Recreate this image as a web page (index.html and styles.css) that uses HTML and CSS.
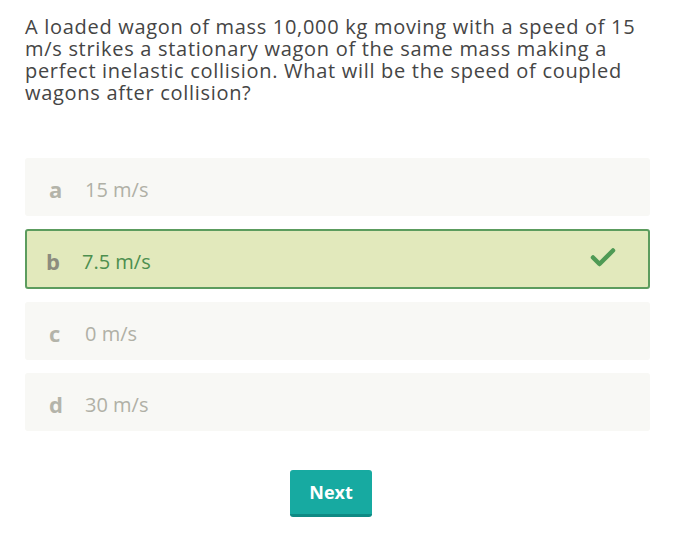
FILE: index.html
```html
<!DOCTYPE html>
<html>
<head>
<meta charset="utf-8">
<link rel="stylesheet" href="styles.css">
</head>
<body>
<div class="quiz">
  <p class="question">A loaded wagon of mass 10,000 kg moving with a speed of 15 m/s strikes a stationary wagon of the same mass making a perfect inelastic collision. What will be the speed of coupled wagons after collision?</p>
  <div class="options">
    <div class="option"><span class="letter">a</span><span class="answer">15 m/s</span></div>
    <div class="option correct"><span class="letter">b</span><span class="answer">7.5 m/s</span>
      <svg class="check" width="26" height="20" viewBox="0 0 26 20"><path d="M3 10.5 L9.5 17 L23 3.5" fill="none" stroke="#4f9a55" stroke-width="4.5" stroke-linecap="round" stroke-linejoin="round"/></svg>
    </div>
    <div class="option"><span class="letter">c</span><span class="answer">0 m/s</span></div>
    <div class="option"><span class="letter">d</span><span class="answer">30 m/s</span></div>
  </div>
  <div class="actions"><button class="next">Next</button></div>
</div>
</body>
</html>
```
FILE: styles.css
```css
html, body { margin: 0; padding: 0; background: #fff; }
body { font-family: "Open Sans", Lato, sans-serif; }
.quiz { width: 625px; padding: 16px 0 0 25px; }
.question {
  margin: 0;
  font-size: 20px;
  line-height: 22px;
  color: #454545;
  letter-spacing: 0.7px;
}
.options { margin-top: 54px; display: flex; flex-direction: column; gap: 13px; }
.option {
  display: flex;
  align-items: center;
  height: 58px;
  box-sizing: border-box;
  background: #f8f8f5;
  border-radius: 3px;
  padding-left: 24px;
  padding-top: 4px;
  font-size: 20px;
  color: #b0b0a6;
}
.letter { font-weight: 700; font-size: 22px; width: 36px; color: #b4b4aa; }
.option.correct {
  height: 60px;
  background: #e2e9bc;
  border: 2px solid #5c9c5e;
  padding-left: 19px;
  color: #4d8f4f;
}
.option.correct .letter { color: #8c8c7e; }
.check { margin-left: auto; margin-right: 32px; margin-top: -8px; }
.actions { margin-top: 39px; padding-left: 265px; }
.next {
  width: 82px;
  height: 47px;
  border: none;
  border-bottom: 3px solid #0f8a84;
  border-radius: 3px;
  background: #17aaa1;
  color: #fff;
  font-family: inherit;
  font-weight: 700;
  font-size: 18px;
  padding: 0;
}
```
